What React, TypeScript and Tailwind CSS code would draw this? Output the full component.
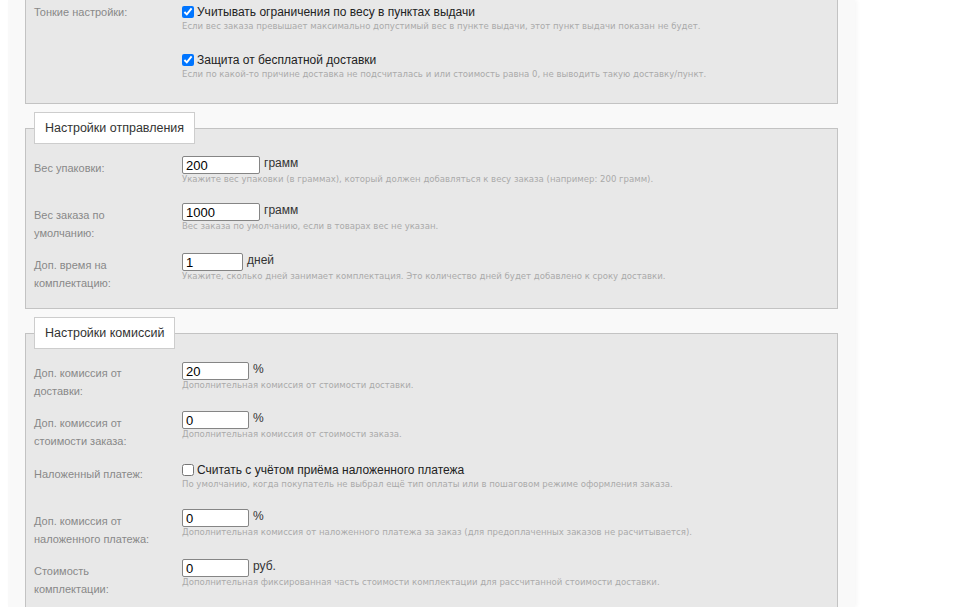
import React from "react";

type Row =
  | {
      kind: "input";
      label?: string;
      value: string;
      width: string;
      unit: string;
      hint: string;
      labelTop?: string;
    }
  | {
      kind: "check";
      label?: string;
      checked: boolean;
      text: string;
      hint: string;
      labelTop?: string;
    };

const fineRows: Row[] = [
  {
    kind: "check",
    label: "Тонкие настройки:",
    checked: true,
    text: "Учитывать ограничения по весу в пунктах выдачи",
    hint: "Если вес заказа превышает максимально допустимый вес в пункте выдачи, этот пункт выдачи показан не будет.",
    labelTop: "pt-0",
  },
  {
    kind: "check",
    checked: true,
    text: "Защита от бесплатной доставки",
    hint: "Если по какой-то причине доставка не подсчиталась и или стоимость равна 0, не выводить такую доставку/пункт.",
  },
];

const shipRows: Row[] = [
  {
    kind: "input",
    label: "Вес упаковки:",
    value: "200",
    width: "w-[78px]",
    unit: "грамм",
    hint: "Укажите вес упаковки (в граммах), который должен добавляться к весу заказа (например: 200 грамм).",
  },
  {
    kind: "input",
    label: "Вес заказа по умолчанию:",
    value: "1000",
    width: "w-[78px]",
    unit: "грамм",
    hint: "Вес заказа по умолчанию, если в товарах вес не указан.",
  },
  {
    kind: "input",
    label: "Доп. время на комплектацию:",
    value: "1",
    width: "w-[61px]",
    unit: "дней",
    hint: "Укажите, сколько дней занимает комплектация. Это количество дней будет добавлено к сроку доставки.",
  },
];

const feeRows: Row[] = [
  {
    kind: "input",
    label: "Доп. комиссия от доставки:",
    value: "20",
    width: "w-[67px]",
    unit: "%",
    hint: "Дополнительная комиссия от стоимости доставки.",
    labelTop: "pt-[2px]",
  },
  {
    kind: "input",
    label: "Доп. комиссия от стоимости заказа:",
    value: "0",
    width: "w-[67px]",
    unit: "%",
    hint: "Дополнительная комиссия от стоимости заказа.",
  },
  {
    kind: "check",
    label: "Наложенный платеж:",
    checked: false,
    text: "Считать с учётом приёма наложенного платежа",
    hint: "По умолчанию, когда покупатель не выбрал ещё тип оплаты или в пошаговом режиме оформления заказа.",
    labelTop: "pt-[4px]",
  },
  {
    kind: "input",
    label: "Доп. комиссия от наложенного платежа:",
    value: "0",
    width: "w-[67px]",
    unit: "%",
    hint: "Дополнительная комиссия от наложенного платежа за заказ (для предоплаченных заказов не расчитывается).",
  },
  {
    kind: "input",
    label: "Стоимость комплектации:",
    value: "0",
    width: "w-[67px]",
    unit: "руб.",
    hint: "Дополнительная фиксированная часть стоимости комплектации для рассчитанной стоимости доставки.",
  },
];

const SettingRow = ({ row }: { row: Row }) => (
  <div className="flex pb-[11px]">
    <div
      className={`w-[148px] shrink-0 pr-[28px] text-[11px] leading-[18px] text-[#888] ${
        row.labelTop ?? "pt-[3px]"
      }`}
    >
      {row.label}
    </div>
    <div className={`flex-1 ${row.kind === "check" ? "min-h-[37px]" : "min-h-[36px]"}`}>
      {row.kind === "input" ? (
        <div className="flex h-[18px] items-start">
          <input
            type="text"
            defaultValue={row.value}
            className={`${row.width} h-[18px] rounded-[2px] border border-[#858585] bg-white px-[3px] text-[13px] leading-[16px] text-black outline-none`}
          />
          <span className="ml-[4px] text-[12px] leading-[14px] text-[#333]">{row.unit}</span>
        </div>
      ) : (
        <label className="flex h-[18px] items-center">
          <input
            type="checkbox"
            defaultChecked={row.checked}
            className="m-0 mr-[3px] h-[12px] w-[12px] accent-[#0075ff]"
          />
          <span className="text-[12px] leading-[14px] text-[#222]">{row.text}</span>
        </label>
      )}
      <div className="font-['DejaVu_Sans',Verdana,sans-serif] text-[8.55px] leading-[11px] text-[#aaa]">
        {row.hint}
      </div>
    </div>
  </div>
);

const Group = ({ title, rows, pad }: { title?: string; rows: Row[]; pad: string }) => (
  <fieldset className={`border border-[#c3c3c3] bg-[#e8e8e8] pl-[8px] pr-[8px] ${pad}`}>
    {title && (
      <legend className="border border-[#cdcdcd] bg-white px-[10px] py-[7px] text-[12.5px] leading-[16px] text-[#333]">
        {title}
      </legend>
    )}
    {rows.map((row, i) => (
      <SettingRow key={i} row={row} />
    ))}
  </fieldset>
);

export default function App() {
  return (
    <div className="h-[607px] overflow-hidden bg-white font-['Liberation_Sans',Arial,sans-serif]">
      <div className="ml-[8px] flex h-full w-[847px] flex-col bg-[#f9f9f9] px-[17px] shadow-[2px_0_4px_rgba(0,0,0,0.04)]">
        <div className="-mt-[20px] flex flex-col gap-[8px]">
          <Group rows={fineRows} pad="pt-[22px] pb-[4px]" />
          <Group title="Настройки отправления" rows={shipRows} pad="pt-[12px] pb-[5px]" />
          <Group title="Настройки комиссий" rows={feeRows} pad="pt-[13px] pb-[5px]" />
        </div>
      </div>
    </div>
  );
}
